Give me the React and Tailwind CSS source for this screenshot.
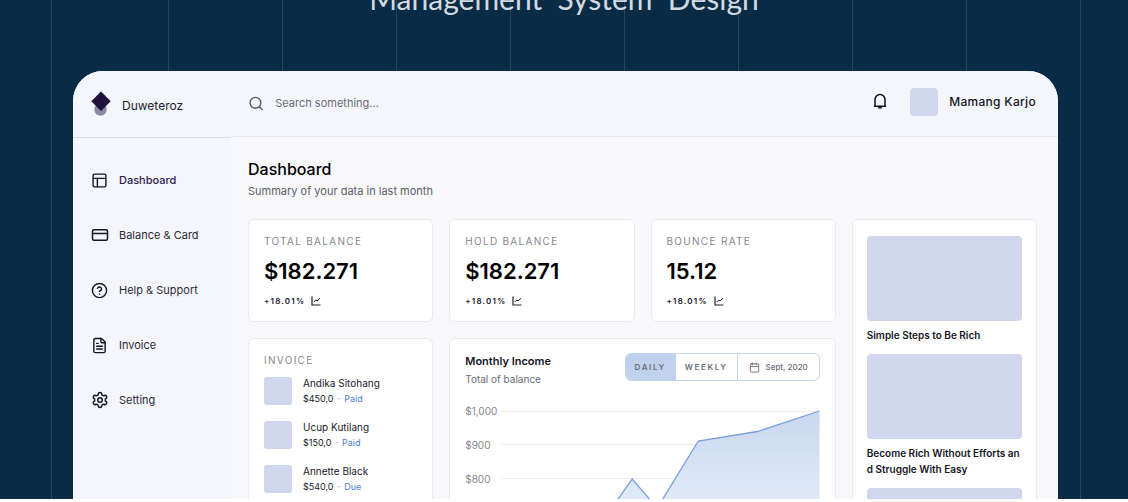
import React, { useState } from 'react';
import { Search, CircleHelp, CreditCard, Settings, FileText, PanelsTopLeft, Calendar } from 'lucide-react';

const NAV_ITEMS = [
  { label: 'Dashboard', icon: PanelsTopLeft, size: 17, active: true },
  { label: 'Balance & Card', icon: CreditCard, size: 18 },
  { label: 'Help & Support', icon: CircleHelp, size: 17 },
  { label: 'Invoice', icon: FileText, size: 17 },
  { label: 'Setting', icon: Settings, size: 18 },
];

const STATS = [
  { label: 'TOTAL BALANCE', value: '$182.271', change: '+18.01%' },
  { label: 'HOLD BALANCE', value: '$182.271', change: '+18.01%' },
  { label: 'BOUNCE RATE', value: '15.12', change: '+18.01%' },
];

const INVOICES = [
  { name: 'Andika Sitohang', amount: '$450,0', status: 'Paid' },
  { name: 'Ucup Kutilang', amount: '$150,0', status: 'Paid' },
  { name: 'Annette Black', amount: '$540,0', status: 'Due' },
];

const ARTICLES = ['Simple Steps to Be Rich', 'Become Rich Without Efforts and Struggle With Easy'];

const AXIS = ['$1,000', '$900', '$800'];

const Card = ({ as: Tag = 'section', className = '', children }) => (
  <Tag className={`bg-white border border-[#e9eaee] rounded-md ${className}`}>{children}</Tag>
);

const Logo = () => (
  <svg width="20" height="26" viewBox="0 0 20 26" aria-hidden="true">
    <circle cx="9.5" cy="18.5" r="6.2" fill="#8e89a3" />
    <path d="M10 0.5 19.7 10.2 10 19.9 0.3 10.2Z" fill="#20123a" />
  </svg>
);

const BellIcon = () => (
  <svg width="14" height="17" viewBox="0 0 14 17" fill="none" stroke="#111118" strokeWidth="1.5" aria-hidden="true">
    <path d="M2 13V6.5a5 5 0 0 1 10 0V13" />
    <path d="M0.8 13.2h12.4" />
    <path d="M5.2 14.6h3.6" strokeWidth="1.8" />
  </svg>
);

const TrendIcon = () => (
  <svg width="10" height="10" viewBox="0 0 10 10" fill="none" stroke="#20202c" aria-hidden="true">
    <path d="M1 0.5V9H9.5" strokeWidth="1.2" />
    <path d="M2.8 6 4.8 4 6 5 9 2.2" strokeWidth="1" />
  </svg>
);

const Sidebar = () => (
  <aside className="w-[158px] shrink-0 bg-[#f5f6fc]">
    <div className="flex h-[67px] items-center gap-[11px] border-b border-[#dcdde4] pl-[18px] text-xs text-[#20202c]">
      <Logo />
      <span className="pt-1">Duweteroz</span>
    </div>
    <nav className="flex flex-col gap-[31px] pt-[30px] pl-[17px]">
      {NAV_ITEMS.map(({ label, icon: Icon, size, active }) => (
        <a key={label} href="#" className="flex items-center gap-2.5 h-6">
          <span className="flex w-[19px] justify-center">
            <Icon size={size} strokeWidth={2} color="#15151f" />
          </span>
          <span className={`text-[11px] ${active ? 'font-medium text-[#2a1a4a]' : 'text-[#2b2b36]'}`}>{label}</span>
        </a>
      ))}
    </nav>
  </aside>
);

const Header = () => (
  <header className="flex h-[66px] items-center border-b border-[#e8e9ee] bg-[#f5f6fc] pl-[17px] pr-[22px]">
    <label className="flex flex-1 items-center gap-[11px]">
      <Search size={17} strokeWidth={2} color="#55565f" />
      <input
        type="search"
        aria-label="Search"
        placeholder="Search something..."
        className="w-full bg-transparent text-[11px] outline-none placeholder:text-[#6b6c74]"
      />
    </label>
    <div className="flex items-center pb-1">
      <button type="button" aria-label="Notifications">
        <BellIcon />
      </button>
      <span className="ml-[23px] size-7 rounded bg-[#cfd6ee]" />
      <span className="ml-[11px] text-xs font-medium tracking-wide text-[#15151f]">Mamang Karjo</span>
    </div>
  </header>
);

const StatCard = ({ label, value, change }) => (
  <Card className="px-[15px] pt-[13px] pb-[14px]">
    <h3 className="text-[10px] leading-4 tracking-[0.13em] text-[#85868c]">{label}</h3>
    <p className="mt-1.5 text-[22px] leading-8 font-semibold text-black">{value}</p>
    <p className="mt-2 flex items-center gap-1.5 text-[8px] leading-3 font-semibold tracking-[0.15em] text-[#20202c]">
      {change}
      <TrendIcon />
    </p>
  </Card>
);

const InvoiceCard = () => (
  <Card className="px-[15px] pt-[13px]">
    <h3 className="text-[10px] leading-4 tracking-[0.13em] text-[#85868c]">INVOICE</h3>
    <ul className="mt-[9px] flex flex-col gap-4">
      {INVOICES.map((item) => (
        <li key={item.name} className="flex h-7 gap-[11px]">
          <span className="size-7 rounded-[3px] bg-[#cfd6ee]" />
          <div className="flex flex-col">
            <span className="text-[10px] leading-3 text-[#20202c]">{item.name}</span>
            <span className="mt-1 flex text-[9px] leading-3 text-[#20202c]">
              {item.amount}
              <span className="px-1 text-[#85868c]">·</span>
              <span className="text-[#4a7fd6]">{item.status}</span>
            </span>
          </div>
        </li>
      ))}
    </ul>
  </Card>
);

const IncomeCard = () => {
  const [period, setPeriod] = useState('DAILY');

  return (
    <Card className="col-span-2 px-[15px] pt-[14px]">
      <div className="flex items-start justify-between">
        <div>
          <h3 className="text-[11px] leading-4 font-semibold text-[#15151f]">Monthly Income</h3>
          <p className="mt-0.5 text-[10px] leading-4 text-[#6b6c74]">Total of balance</p>
        </div>
        <div className="flex h-7 overflow-hidden rounded-md border border-[#c2d3f0] text-[8px] font-semibold text-[#6b6c74]">
          {['DAILY', 'WEEKLY'].map((item) => (
            <button
              key={item}
              type="button"
              onClick={() => setPeriod(item)}
              className={`border-r border-[#c2d3f0] px-[9px] tracking-[0.2em] ${period === item ? 'bg-[#c0d1ee]' : ''}`}
            >
              {item}
            </button>
          ))}
          <button type="button" className="flex items-center gap-1.5 px-[11px] font-medium">
            <Calendar size={11} strokeWidth={2} />
            Sept, 2020
          </button>
        </div>
      </div>

      <div className="mt-[7px] flex">
        <div className="w-9 shrink-0 text-[10px] text-[#85868c]">
          {AXIS.map((label) => (
            <div key={label} className="flex h-[34px] items-center">{label}</div>
          ))}
        </div>
        <svg className="h-[140px] min-w-0 flex-1" viewBox="0 0 318 140" preserveAspectRatio="none" role="img" aria-label="Monthly income chart">
          <defs>
            <linearGradient id="income" x1="0" y1="17" x2="0" y2="140" gradientUnits="userSpaceOnUse">
              <stop offset="0" stopColor="#c8d7f0" />
              <stop offset="1" stopColor="#e9f0fa" />
            </linearGradient>
          </defs>
          <path d="M0 17.5H318M0 50.5H318M0 84.5H318" stroke="#ebecee" />
          <path d="M92 140 131 85 156 114 197 47 256 37.5 318 17V140Z" fill="url(#income)" />
          <path d="M92 140 131 85 156 114 197 47 256 37.5 318 17" fill="none" stroke="#789fe0" strokeWidth="1.3" />
        </svg>
      </div>
    </Card>
  );
};

const ArticlesCard = () => (
  <Card as="aside" className="row-span-2 px-[14px] pt-4">
    {ARTICLES.map((title) => (
      <article key={title}>
        <div className="h-[85px] rounded bg-[#cfd6ee]" />
        <h3 className="mt-1.5 mb-[11px] text-[10px] leading-4 font-semibold break-all text-[#15151f]">{title}</h3>
      </article>
    ))}
    <div className="h-[85px] rounded bg-[#cfd6ee]" />
  </Card>
);

// Thin vertical rules behind the window
const Backdrop = () => (
  <div className="absolute inset-0 flex pl-[51px] pr-[47px]" aria-hidden="true">
    <div className="w-[117px] shrink-0 border-l border-[#29445b]" />
    {[1, 2, 3, 4, 5, 6, 7].map((n) => (
      <div key={n} className="flex-1 border-l border-[#29445b]" />
    ))}
    <div className="flex-1 border-x border-[#29445b]" />
  </div>
);

export default function App() {
  return (
    <div className="h-screen overflow-hidden bg-white pb-[3px] font-['Inter',sans-serif]">
      <div className="relative flex h-full flex-col overflow-hidden bg-[#0a2b45]">
        <Backdrop />
        <h1 className="relative -mt-5 h-[91px] shrink-0 whitespace-pre text-center font-['Lato',sans-serif] text-[30px] leading-9 text-[#d3dae0]">
          {'Management  System  Design'}
        </h1>

        <div className="relative ml-[73px] mr-[70px] flex shrink-0 overflow-hidden rounded-t-[30px] bg-[#f8f8fb]">
          <Sidebar />
          <div className="min-w-0 flex-1">
            <Header />
            <main className="pt-5 pl-[17px] pr-[21px]">
              <h2 className="text-base leading-6 font-medium text-black">Dashboard</h2>
              <p className="mt-0.5 text-[11px] leading-4 text-[#5d5e66]">Summary of your data in last month</p>

              <div className="mt-5 grid grid-cols-4 grid-rows-[auto_1fr] gap-4">
                {STATS.map((stat) => (
                  <StatCard key={stat.label} {...stat} />
                ))}
                <ArticlesCard />
                <InvoiceCard />
                <IncomeCard />
              </div>
            </main>
          </div>
        </div>
      </div>
    </div>
  );
}
